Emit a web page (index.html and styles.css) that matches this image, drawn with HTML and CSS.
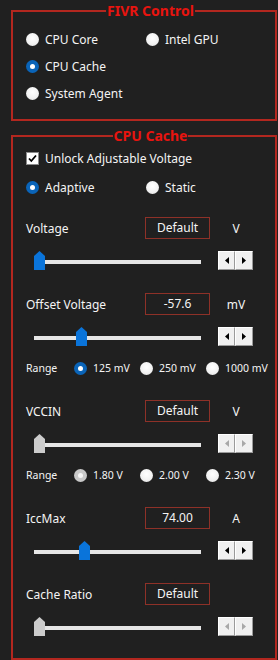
FILE: index.html
```html
<!DOCTYPE html>
<html lang="en">
  <head>
    <meta charset="UTF-8" />
    <title>FIVR Control</title>
    <link rel="stylesheet" href="styles.css">
  </head>
  <body>
    <fieldset class="group group-fivr">
      <legend>FIVR Control</legend>
      <div class="domain-grid">
        <label class="radio"><span class="dot"></span>CPU Core</label>
        <label class="radio"><span class="dot"></span>Intel GPU</label>
        <label class="radio checked"><span class="dot"></span>CPU Cache</label>
        <span></span>
        <label class="radio"><span class="dot"></span>System Agent</label>
      </div>
    </fieldset>

    <fieldset class="group group-cache">
      <legend>CPU Cache</legend>

      <label class="check">
        <span class="box">
          <svg width="11" height="11" viewBox="0 0 11 11"><path d="M2 5.5 L4.3 8 L9 2.5" fill="none" stroke="#000" stroke-width="1.8"/></svg>
        </span>
        Unlock Adjustable Voltage
      </label>

      <div class="mode-row">
        <label class="radio checked"><span class="dot"></span>Adaptive</label>
        <label class="radio"><span class="dot"></span>Static</label>
      </div>

      <!-- Voltage -->
      <div class="field">
        <div class="field-head">
          <span class="field-label">Voltage</span>
          <span class="value-box">Default</span>
          <span class="unit">V</span>
        </div>
        <div class="slider-row">
          <div class="slider"><div class="track"></div><div class="thumb" style="left: 0px"></div></div>
          <div class="spin">
            <button><svg width="4" height="7" viewBox="0 0 4 7"><polygon points="4,0 0,3.5 4,7"/></svg></button>
            <button><svg width="4" height="7" viewBox="0 0 4 7"><polygon points="0,0 4,3.5 0,7"/></svg></button>
          </div>
        </div>
      </div>

      <!-- Offset Voltage -->
      <div class="field">
        <div class="field-head">
          <span class="field-label">Offset Voltage</span>
          <span class="value-box">-57.6</span>
          <span class="unit">mV</span>
        </div>
        <div class="slider-row">
          <div class="slider"><div class="track"></div><div class="thumb" style="left: 42px"></div></div>
          <div class="spin">
            <button><svg width="4" height="7" viewBox="0 0 4 7"><polygon points="4,0 0,3.5 4,7"/></svg></button>
            <button><svg width="4" height="7" viewBox="0 0 4 7"><polygon points="0,0 4,3.5 0,7"/></svg></button>
          </div>
        </div>
        <div class="range-row">
          <span class="range-label">Range</span>
          <label class="radio checked"><span class="dot"></span>125 mV</label>
          <label class="radio"><span class="dot"></span>250 mV</label>
          <label class="radio"><span class="dot"></span>1000 mV</label>
        </div>
      </div>

      <!-- VCCIN -->
      <div class="field disabled">
        <div class="field-head">
          <span class="field-label">VCCIN</span>
          <span class="value-box">Default</span>
          <span class="unit">V</span>
        </div>
        <div class="slider-row">
          <div class="slider"><div class="track"></div><div class="thumb" style="left: 0px"></div></div>
          <div class="spin">
            <button><svg width="4" height="7" viewBox="0 0 4 7"><polygon points="4,0 0,3.5 4,7"/></svg></button>
            <button><svg width="4" height="7" viewBox="0 0 4 7"><polygon points="0,0 4,3.5 0,7"/></svg></button>
          </div>
        </div>
        <div class="range-row">
          <span class="range-label">Range</span>
          <label class="radio checked"><span class="dot"></span>1.80 V</label>
          <label class="radio"><span class="dot"></span>2.00 V</label>
          <label class="radio"><span class="dot"></span>2.30 V</label>
        </div>
      </div>

      <!-- IccMax -->
      <div class="field">
        <div class="field-head">
          <span class="field-label">IccMax</span>
          <span class="value-box">74.00</span>
          <span class="unit">A</span>
        </div>
        <div class="slider-row">
          <div class="slider"><div class="track"></div><div class="thumb" style="left: 45px"></div></div>
          <div class="spin">
            <button><svg width="4" height="7" viewBox="0 0 4 7"><polygon points="4,0 0,3.5 4,7"/></svg></button>
            <button><svg width="4" height="7" viewBox="0 0 4 7"><polygon points="0,0 4,3.5 0,7"/></svg></button>
          </div>
        </div>
      </div>

      <!-- Cache Ratio -->
      <div class="field disabled">
        <div class="field-head">
          <span class="field-label">Cache Ratio</span>
          <span class="value-box">Default</span>
          <span class="unit"></span>
        </div>
        <div class="slider-row">
          <div class="slider"><div class="track"></div><div class="thumb" style="left: 0px"></div></div>
          <div class="spin">
            <button><svg width="4" height="7" viewBox="0 0 4 7"><polygon points="4,0 0,3.5 4,7"/></svg></button>
            <button><svg width="4" height="7" viewBox="0 0 4 7"><polygon points="0,0 4,3.5 0,7"/></svg></button>
          </div>
        </div>
      </div>
    </fieldset>
  </body>
</html>
```

FILE: styles.css
```css
* {
  margin: 0;
  padding: 0;
  box-sizing: border-box;
}

body {
  background: #202020;
  color: #f4f4f4;
  font-family: "Noto Sans", "Open Sans", sans-serif;
  font-size: 12px;
  width: 278px;
  height: 660px;
  overflow: hidden;
}

/* group boxes */
.group {
  border: 2px solid #b3271f;
  margin: 0 1px 0 11px;
  padding: 0 0 0 13px;
  min-width: 0;
}

.group legend {
  margin: 0 auto;
  padding: 0 1px;
  color: #e8140f;
  font-weight: 700;
  font-size: 14px;
  line-height: 18px;
}

.group-fivr {
  margin-top: 2px;
  padding-top: 6px;
  padding-bottom: 12px;
}

.group-cache {
  margin-top: 6px;
  height: 533px;
  padding-top: 3px;
}

/* radios */
.radio {
  display: flex;
  align-items: center;
  gap: 6px;
  white-space: nowrap;
}

.radio .dot {
  width: 13px;
  height: 13px;
  border-radius: 50%;
  background: radial-gradient(circle at 50% 40%, #ffffff 0%, #f2f2f2 55%, #dcdcdc 100%);
  flex-shrink: 0;
  position: relative;
}

.radio.checked .dot {
  background: #0a64b8;
}

.radio.checked .dot::after {
  content: "";
  position: absolute;
  left: 4px;
  top: 4px;
  width: 5px;
  height: 5px;
  border-radius: 50%;
  background: #fff;
}

.disabled .radio.checked .dot {
  background: #c8c8c8;
}

.disabled .radio.checked .dot::after {
  background: #f4f4f4;
}

.domain-grid {
  display: grid;
  grid-template-columns: 120px 1fr;
  grid-auto-rows: 27px;
}

/* checkbox */
.check {
  display: flex;
  align-items: center;
  gap: 6px;
  height: 20px;
}

.check .box {
  width: 13px;
  height: 13px;
  background: #fff;
  border: 1px solid #8a8a8a;
  display: flex;
  align-items: center;
  justify-content: center;
}

.mode-row {
  display: grid;
  grid-template-columns: 120px 1fr;
  height: 20px;
  margin-top: 9px;
}

/* field blocks */
.field {
  margin-top: 23px;
}

.mode-row + .field {
  margin-top: 20px;
}

.field-head {
  display: flex;
  align-items: center;
  height: 22px;
}

.field-label {
  width: 119px;
}

.value-box {
  width: 65px;
  height: 22px;
  border: 1px solid #8e3128;
  text-align: center;
  line-height: 19px;
}

.unit {
  width: 52px;
  text-align: center;
}

.slider-row {
  display: flex;
  align-items: center;
  margin-top: 12px;
  height: 19px;
  padding-left: 8px;
}

.slider {
  position: relative;
  width: 167px;
  height: 19px;
}

.track {
  position: absolute;
  left: 0;
  right: 0;
  top: 9px;
  height: 4px;
  background: #e6e6e6;
}

.thumb {
  position: absolute;
  top: 0;
  width: 11px;
  height: 19px;
  background: #0a74da;
  clip-path: polygon(0 5px, 5.5px 0, 11px 5px, 11px 19px, 0 19px);
}

.disabled .thumb {
  background: #cccccc;
}

.spin {
  display: flex;
  margin-left: 17px;
}

.spin button {
  width: 17px;
  height: 19px;
  background: #f0f0f0;
  border: 1px solid;
  border-color: #ffffff #9a9a9a #9a9a9a #ffffff;
  display: flex;
  align-items: center;
  justify-content: center;
}

.spin button + button {
  width: 18px;
}

.spin svg {
  fill: #000;
}

.disabled .spin svg {
  fill: #a8a8a8;
}

.range-row {
  display: grid;
  grid-template-columns: 48px 66px 66px 66px;
  align-items: center;
  height: 18px;
  margin-top: 13px;
  font-size: 10.5px;
}
```
